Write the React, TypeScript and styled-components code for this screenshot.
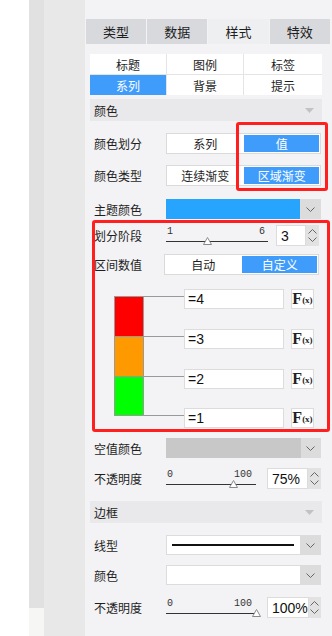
import React from "react";
import styled, { createGlobalStyle } from "styled-components";

const GlobalStyle = createGlobalStyle`
  body {
    margin: 0;
    font-family: "Liberation Sans", "Noto Sans CJK SC", sans-serif;
    color: #1e1e1e;
  }
  * { box-sizing: border-box; }
`;

const Page = styled.div`
  display: flex;
  width: 332px;
  height: 636px;
  overflow: hidden;
  background: #fff;
`;

const Blank = styled.div`
  width: 29px;
  background: #fff;
`;

const Rail = styled.div`
  width: 16px;
  display: flex;
  flex-direction: column;
  background: #e1e1e1;
`;

const RailFoot = styled.div`
  margin-top: auto;
  height: 28px;
  background: #f6f6f4;
`;

const Gutter = styled.div`
  width: 41px;
  background: #e8e8e8;
`;

const Panel = styled.div`
  flex: 1;
  background: #f3f3f5;
  padding: 19px 2px 0 1px;
  display: flex;
  flex-direction: column;
`;

const Tabs = styled.div`
  display: grid;
  grid-template-columns: repeat(4, 1fr);
  column-gap: 1px;
  height: 25px;
`;

const Tab = styled.div<{ $active?: boolean }>`
  display: flex;
  align-items: center;
  justify-content: center;
  font-size: 13px;
  background: ${(p) => (p.$active ? "#eeeff1" : "#d8d9dc")};
`;

const Body = styled.div`
  padding: 0 8px 0 4px;
`;

const SubTabs = styled.div`
  margin-top: 10px;
  display: grid;
  grid-template-columns: 76px 76px 1fr;
  grid-auto-rows: 20px;
  gap: 1px;
  background: #e4e4e6;
`;

const SubTab = styled.div<{ $active?: boolean }>`
  display: flex;
  align-items: center;
  justify-content: center;
  font-size: 12px;
  background: ${(p) => (p.$active ? "#409cfb" : "#fff")};
  color: ${(p) => (p.$active ? "#fff" : "#1e1e1e")};
`;

const SectionHead = styled.div<{ $mt: number }>`
  margin-top: ${(p) => p.$mt}px;
  height: 22px;
  background: #e9e9eb;
  display: flex;
  align-items: center;
  justify-content: space-between;
  padding: 0 8px 0 4px;
  font-size: 12px;
`;

const Rows = styled.div`
  padding-left: 4px;
`;

const Row = styled.div<{ $mt: number }>`
  display: grid;
  grid-template-columns: 72px 1fr;
  align-items: center;
  margin-top: ${(p) => p.$mt}px;
  padding-right: 1px;
`;

const Label = styled.span`
  font-size: 12px;
  white-space: nowrap;
`;

const Segmented = styled.div<{ $shift?: number }>`
  display: grid;
  grid-template-columns: 1fr 1fr;
  height: 21px;
  border: 1px solid #dadada;
  background: #fff;
  margin-left: ${(p) => p.$shift || 0}px;
  margin-right: ${(p) => (p.$shift ? -p.$shift : 0)}px;
`;

const Segment = styled.div<{ $on?: boolean }>`
  display: flex;
  align-items: center;
  justify-content: center;
  font-size: 12px;
  background: ${(p) => (p.$on ? "#409cfb" : "#fff")};
  color: ${(p) => (p.$on ? "#fff" : "#1e1e1e")};
  margin: ${(p) => (p.$on ? "1px" : "0")};
`;

const Marked = styled.div`
  position: relative;
`;

const Highlight = styled.div`
  position: absolute;
  top: -11px;
  bottom: -5px;
  left: 142px;
  right: -6px;
  border: 3px solid #ff1f1f;
  border-radius: 3px;
  pointer-events: none;
`;

const Group = styled.div`
  position: relative;
  margin-top: 6px;
  &::after {
    content: "";
    position: absolute;
    top: -5px;
    left: -2px;
    right: -8px;
    bottom: -4px;
    border: 3px solid #ff1f1f;
    border-radius: 3px;
    pointer-events: none;
  }
`;

const Select = styled.div`
  display: flex;
  height: 20px;
`;

const SelectField = styled.div<{ $fill: string }>`
  flex: 1;
  background: ${(p) => p.$fill};
  border: 1px solid ${(p) => (p.$fill === "#fff" ? "#dcdcdc" : p.$fill)};
  display: flex;
  align-items: center;
  padding: 0 6px 0 5px;
`;

const LineSample = styled.div`
  flex: 1;
  height: 1.5px;
  background: #111;
`;

const SelectArrow = styled.div<{ $w: number }>`
  width: ${(p) => p.$w}px;
  background: #dcdcdc;
  display: flex;
  align-items: center;
  justify-content: center;
`;

const Inline = styled.div`
  display: flex;
  align-items: center;
`;

const SliderBox = styled.div<{ $w: number }>`
  position: relative;
  width: ${(p) => p.$w}px;
  height: 20px;
`;

const Ticks = styled.div<{ $pr: number }>`
  display: flex;
  justify-content: space-between;
  padding: 1px ${(p) => p.$pr}px 0 1px;
  font-family: "Liberation Mono", monospace;
  font-size: 10px;
  line-height: 10px;
  color: #333;
`;

const Track = styled.div`
  margin-top: 4px;
  height: 1px;
  background: #333;
`;

const Thumb = styled.svg`
  position: absolute;
  top: 11px;
  margin-left: -4px;
`;

const Spin = styled.div<{ $w: number; $ml: number }>`
  display: flex;
  height: 21px;
  width: ${(p) => p.$w}px;
  margin-left: ${(p) => p.$ml}px;
`;

const SpinValue = styled.div`
  flex: 1;
  background: #fff;
  border: 1px solid #dcdcdc;
  display: flex;
  align-items: center;
  padding-left: 4px;
  font-size: 14px;
  color: #111;
`;

const SpinArrows = styled.div`
  width: 13px;
  background: #e2e2e2;
  display: flex;
  flex-direction: column;
  align-items: center;
  justify-content: space-evenly;
`;

const Chart = styled.div`
  margin-top: 21px;
  padding-left: 20px;
  display: flex;
  flex-direction: column;
`;

const Step = styled.div<{ $h?: number }>`
  display: flex;
  height: ${(p) => (p.$h ? `${p.$h}px` : "auto")};
`;

const Swatch = styled.div<{ $color?: string }>`
  width: 30px;
  background: ${(p) => p.$color || "transparent"};
  border-top: 1px solid #999;
  border-left: ${(p) => (p.$color ? "1px solid #999" : "none")};
  border-right: ${(p) => (p.$color ? "1px solid #999" : "none")};
`;

const Connector = styled.div`
  width: 40px;
  border-top: 1px solid #999;
`;

const StepInput = styled.div`
  width: 100px;
  height: 20px;
  margin-top: -7px;
  border: 1px solid #dcdcdc;
  background: #fff;
  display: flex;
  align-items: center;
  padding-left: 3px;
  font-size: 14px;
  color: #111;
`;

const FxButton = styled.div`
  width: 23px;
  height: 20px;
  margin: -7px 0 0 7px;
  border: 1px solid #dcdcdc;
  background: #fff;
  display: flex;
  align-items: center;
  justify-content: center;
  font-family: "Liberation Serif", serif;
  color: #222;
`;

const FxF = styled.span`
  font-size: 16px;
  font-weight: bold;
  line-height: 1;
`;

const FxX = styled.span`
  font-size: 9px;
  font-weight: bold;
  line-height: 1;
  margin-top: 3px;
`;

const Chevron = ({ up }: { up?: boolean }) => (
  <svg width="9" height="5" viewBox="0 0 9 5">
    <polyline
      points={up ? "0.5,4.5 4.5,0.5 8.5,4.5" : "0.5,0.5 4.5,4.5 8.5,0.5"}
      fill="none"
      stroke="#666"
      strokeWidth="1"
    />
  </svg>
);

const Caret = () => (
  <svg width="9" height="5" viewBox="0 0 9 5">
    <polygon points="0,0 9,0 4.5,5" fill="#c2c2c4" />
  </svg>
);

interface SliderProps {
  min: number;
  max: number;
  value: number;
  width: number;
  trackWidth: number;
  labelPad: number;
}

const Slider = (props: SliderProps) => {
  const pos = ((props.value - props.min) / (props.max - props.min)) * props.trackWidth;
  return (
    <SliderBox $w={props.width}>
      <Ticks $pr={props.labelPad}>
        <span>{props.min}</span>
        <span>{props.max}</span>
      </Ticks>
      <Track style={{ width: props.trackWidth }} />
      <Thumb width="9" height="8" viewBox="0 0 9 8" style={{ left: pos }}>
        <polygon points="4.5,0.5 8.5,7.5 0.5,7.5" fill="#fff" stroke="#8a8a8a" />
      </Thumb>
    </SliderBox>
  );
};

const Spinner = ({ value, width, ml }: { value: string; width: number; ml: number }) => (
  <Spin $w={width} $ml={ml}>
    <SpinValue>{value}</SpinValue>
    <SpinArrows>
      <Chevron up />
      <Chevron />
    </SpinArrows>
  </Spin>
);

const steps = [
  { color: "#ff0000", value: "=4", h: 40 },
  { color: "#ff9900", value: "=3", h: 40 },
  { color: "#00ff00", value: "=2", h: 39 },
  { color: undefined, value: "=1", h: 0 },
];

const App = (): JSX.Element => {
  return (
    <Page>
      <GlobalStyle />
      <Blank />
      <Rail>
        <RailFoot />
      </Rail>
      <Gutter />
      <Panel>
        <Tabs>
          <Tab>类型</Tab>
          <Tab>数据</Tab>
          <Tab $active>样式</Tab>
          <Tab>特效</Tab>
        </Tabs>
        <Body>
          <SubTabs>
            <SubTab>标题</SubTab>
            <SubTab>图例</SubTab>
            <SubTab>标签</SubTab>
            <SubTab $active>系列</SubTab>
            <SubTab>背景</SubTab>
            <SubTab>提示</SubTab>
          </SubTabs>

          <SectionHead $mt={4}>
            <span>颜色</span>
            <Caret />
          </SectionHead>
          <Rows>
            <Marked>
              <Row $mt={12}>
                <Label>颜色划分</Label>
                <Segmented>
                  <Segment>系列</Segment>
                  <Segment $on>值</Segment>
                </Segmented>
              </Row>
              <Row $mt={11}>
                <Label>颜色类型</Label>
                <Segmented>
                  <Segment>连续渐变</Segment>
                  <Segment $on>区域渐变</Segment>
                </Segmented>
              </Row>
              <Highlight />
            </Marked>
            <Row $mt={13}>
              <Label>主题颜色</Label>
              <Select>
                <SelectField $fill="#27a4fd" />
                <SelectArrow $w={21}>
                  <Chevron />
                </SelectArrow>
              </Select>
            </Row>

            <Group>
              <Row $mt={0}>
                <Label>划分阶段</Label>
                <Inline>
                  <Slider min={1} max={6} value={3} width={103} trackWidth={102} labelPad={4} />
                  <Spinner value="3" width={43} ml={7} />
                </Inline>
              </Row>
              <Row $mt={8}>
                <Label>区间数值</Label>
                <Segmented $shift={-2}>
                  <Segment>自动</Segment>
                  <Segment $on>自定义</Segment>
                </Segmented>
              </Row>
              <Chart>
                {steps.map((s) => (
                  <Step key={s.value} $h={s.h || undefined}>
                    <Swatch $color={s.color} />
                    <Connector />
                    <StepInput>{s.value}</StepInput>
                    <FxButton>
                      <FxF>F</FxF>
                      <FxX>(x)</FxX>
                    </FxButton>
                  </Step>
                ))}
              </Chart>
            </Group>

            <Row $mt={10}>
              <Label>空值颜色</Label>
              <Select>
                <SelectField $fill="#c8c8c8" />
                <SelectArrow $w={20}>
                  <Chevron />
                </SelectArrow>
              </Select>
            </Row>
            <Row $mt={10}>
              <Label>不透明度</Label>
              <Inline>
                <Slider min={0} max={100} value={75} width={94} trackWidth={90} labelPad={8} />
                <Spinner value="75%" width={54} ml={7} />
              </Inline>
            </Row>
          </Rows>

          <SectionHead $mt={12}>
            <span>边框</span>
            <Caret />
          </SectionHead>
          <Rows>
            <Row $mt={12}>
              <Label>线型</Label>
              <Select>
                <SelectField $fill="#fff">
                  <LineSample />
                </SelectField>
                <SelectArrow $w={20}>
                  <Chevron />
                </SelectArrow>
              </Select>
            </Row>
            <Row $mt={10}>
              <Label>颜色</Label>
              <Select>
                <SelectField $fill="#fff" />
                <SelectArrow $w={20}>
                  <Chevron />
                </SelectArrow>
              </Select>
            </Row>
            <Row $mt={12}>
              <Label>不透明度</Label>
              <Inline>
                <Slider min={0} max={100} value={100} width={94} trackWidth={90} labelPad={8} />
                <Spinner value="100%" width={54} ml={7} />
              </Inline>
            </Row>
          </Rows>
        </Body>
      </Panel>
    </Page>
  );
};

export default App;
